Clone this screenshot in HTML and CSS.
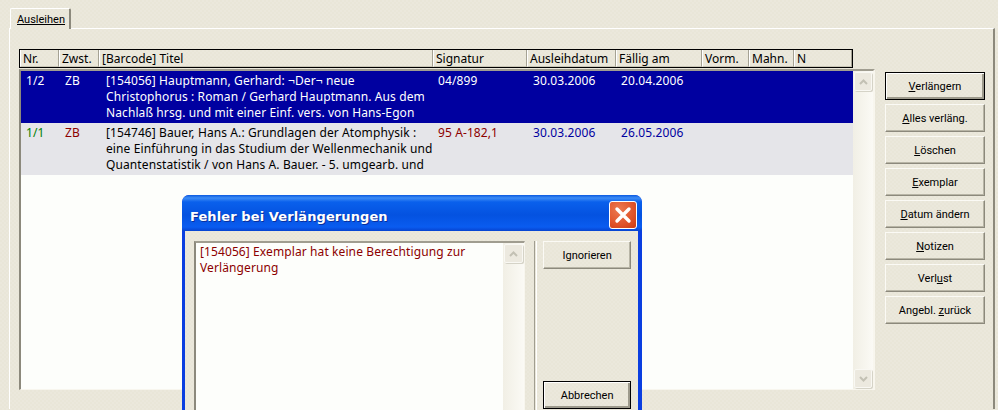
FILE: index.html
```html
<!DOCTYPE html>
<html lang="de">
<head>
<meta charset="utf-8">
<title>Ausleihen</title>
<link rel="stylesheet" href="styles.css">
</head>
<body>
<div class="tabs"><div class="tab"><span class="u">Ausleihen</span></div></div>
<main class="panel">
  <section class="table">
    <div class="thead">
      <div class="th w-nr">Nr.</div>
      <div class="th w-zw">Zwst.</div>
      <div class="th w-ti">[Barcode] Titel</div>
      <div class="th w-si">Signatur</div>
      <div class="th w-au">Ausleihdatum</div>
      <div class="th w-fa">Fällig am</div>
      <div class="th w-vo">Vorm.</div>
      <div class="th w-ma">Mahn.</div>
      <div class="th w-n">N</div>
    </div>
    <div class="list">
      <div class="rows">
        <div class="row selected">
          <div class="td w-nr">1/2</div>
          <div class="td w-zw">ZB</div>
          <div class="td w-ti">[154056] Hauptmann, Gerhard: ¬Der¬ neue<br>Christophorus : Roman / Gerhard Hauptmann. Aus dem<br>Nachlaß hrsg. und mit einer Einf. vers. von Hans-Egon</div>
          <div class="td w-si">04/899</div>
          <div class="td w-au">30.03.2006</div>
          <div class="td w-fa">20.04.2006</div>
        </div>
        <div class="row alt">
          <div class="td w-nr green">1/1</div>
          <div class="td w-zw maroon">ZB</div>
          <div class="td w-ti">[154746] Bauer, Hans A.: Grundlagen der Atomphysik :<br>eine Einführung in das Studium der Wellenmechanik und<br>Quantenstatistik / von Hans A. Bauer. - 5. umgearb. und</div>
          <div class="td w-si maroon">95 A-182,1</div>
          <div class="td w-au navy">30.03.2006</div>
          <div class="td w-fa navy">26.05.2006</div>
        </div>
      </div>
      <div class="scroll">
        <div class="sbtn"><svg viewBox="0 0 9 6" width="9" height="6"><path d="M1 5l3.500-3.500L8 5" class="chev"/></svg></div>
        <div class="sbtn"><svg viewBox="0 0 9 6" width="9" height="6"><path d="M1 1l3.500 3.500L8 1" class="chev"/></svg></div>
      </div>
    </div>
  </section>
  <aside class="actions">
    <button class="btn default"><span class="u">V</span>erlängern</button>
    <button class="btn"><span class="u">A</span>lles verläng.</button>
    <button class="btn"><span class="u">L</span>öschen</button>
    <button class="btn"><span class="u">E</span>xemplar</button>
    <button class="btn"><span class="u">D</span>atum ändern</button>
    <button class="btn"><span class="u">N</span>otizen</button>
    <button class="btn">Verl<span class="u">u</span>st</button>
    <button class="btn">Angebl. <span class="u">z</span>urück</button>
  </aside>
</main>
<div class="dialog">
  <header class="titlebar">
    <h1 class="title">Fehler bei Verlängerungen</h1>
    <div class="close"><svg viewBox="0 0 26 26" width="26" height="26"><path d="M7 7l12 12M19 7L7 19" class="x"/></svg></div>
  </header>
  <div class="client">
    <div class="msgbox">
      <p class="msg">[154056] Exemplar hat keine Berechtigung zur<br>Verlängerung</p>
      <div class="scroll small">
        <div class="sbtn"><svg viewBox="0 0 9 6" width="9" height="6"><path d="M1 5l3.500-3.500L8 5" class="chev"/></svg></div>
      </div>
    </div>
    <div class="sep"></div>
    <div class="dlg-actions">
      <button class="btn">Ignorieren</button>
      <button class="btn default">Abbrechen</button>
    </div>
  </div>
</div>
</body>
</html>
```
FILE: styles.css
```css
* { box-sizing: border-box; }
html, body { margin: 0; height: 410px; overflow: hidden; }
body, .tab, .thead, .btn, .client {
  background: repeating-conic-gradient(#ebe8dc 0 25%, #e9e6d8 0 50%) 0 0 / 4px 4px;
}
body {
  position: relative;
  font: 12px "Noto Sans", sans-serif;
  letter-spacing: .1px;
  color: #000;
  padding: 8px 3px 0 9px;
}
.u { text-decoration: underline; }
.tabs { display: flex; height: 21px; padding-left: 1px; position: relative; z-index: 1; }
.tab {
  width: 61px; height: 21px;
  padding: 3px 0 0 6px;
  border-top: 1px solid #fff;
  border-left: 1px solid #fff;
  border-right: 2px solid #8c897c;
  border-radius: 2px 2px 0 0;
  font: 11px/15px Roboto, sans-serif;
  letter-spacing: 0;
}
.panel {
  display: flex; gap: 10px; align-items: flex-start;
  height: 381px;
  margin-top: -1px;
  padding: 20px 0 0 9px;
  border-top: 1px solid #fff;
  border-left: 1px solid #fff;
  border-right: 2px solid #8c897c;
}
.table { width: 856px; }
.thead {
  display: flex; width: 834px; height: 19px;
  border: 1px solid #000;
  letter-spacing: 0;
}
.th {
  height: 17px; line-height: 17px;
  padding-left: 2px;
  border-left: 1px solid #fff;
  border-right: 1px solid #a5a294;
  border-bottom: 1px solid #c9c6b6;
  white-space: nowrap; overflow: hidden;
}
.w-nr { width: 39px; flex: none; }
.w-zw { width: 40px; flex: none; }
.w-ti { width: 334px; flex: none; }
.w-si { width: 94px; flex: none; }
.w-au { width: 89px; flex: none; }
.w-fa { width: 86px; flex: none; }
.w-vo { width: 47px; flex: none; }
.w-ma { width: 45px; flex: none; }
.w-n { flex: 1; }
.list {
  display: flex; height: 321px; margin-top: 1px;
  background: #fdfefb;
  border-top: 2px solid #a09d90;
  border-left: 2px solid #8c897c;
  border-right: 2px solid #f8f6ee;
  border-bottom: 1px solid #f8f6ee;
}
.rows { width: 832px; flex: none; }
.row { display: flex; height: 52px; line-height: 16px; padding-top: 2px; }
.selected { background: #0000a0; color: #fff; }
.alt { background: #e5e5e9; }
.td { padding-left: 6px; white-space: nowrap; overflow: hidden; }
.row .w-nr { width: 38px; padding-left: 5px; }
.row .w-ti { padding-left: 7px; }
.row .w-si, .row .w-fa { padding-left: 5px; }
.green { color: #008000; }
.maroon { color: #8c0000; }
.navy { color: #0000a0; }
.scroll {
  flex: 1;
  display: flex; flex-direction: column; justify-content: space-between;
  padding: 1px;
  background: linear-gradient(90deg, #f1efe5, #fbfaf5);
}
.sbtn {
  height: 19px; flex: none;
  display: flex; align-items: center; justify-content: center;
  background: #ece9df;
  border: 1px solid #f9f8f3;
  border-radius: 2px;
  box-shadow: 1px 1px 0 #d5d3c7;
}
.chev { fill: none; stroke: #c3c1b4; stroke-width: 2; }
.actions { display: flex; flex-direction: column; gap: 4px; margin-top: 23px; width: 100px; flex: none; }
.btn {
  display: block; width: 100%; height: 28px; padding: 0;
  font: 11px Roboto, sans-serif; color: #000;
  border: 1px solid;
  border-color: #fbfaf5 #8c897c #8c897c #fbfaf5;
  box-shadow: inset -1px -1px 0 #b8b5a6;
}
.btn.default {
  border: 1px solid #000;
  box-shadow: inset 1px 1px 0 #fff, inset -2px -2px 0 #9d9a8c;
}
.dialog {
  position: absolute; left: 182px; top: 195px;
  width: 460px; height: 215px;
  overflow: hidden;
  background: #0a3ee0;
  border-radius: 7px 7px 0 0;
  padding: 0 4px 0 3px;
}
.titlebar {
  display: flex; justify-content: space-between;
  height: 36px; margin: 0 -4px 0 -3px;
  padding: 6px 5px 0 8px;
  border-radius: 7px 7px 0 0;
  background: linear-gradient(180deg, #0a5ae0 0, #3d8cf5 3px, #0a60ec 7px, #0452e0 20px, #0a5cf0 32px, #0643d0 36px);
}
.title {
  margin: 7px 0 0;
  font: bold 13px/17px "DejaVu Sans", sans-serif;
  letter-spacing: .1px;
  color: #fff;
  text-shadow: 1px 1px 0 #0a2f9c;
}
.close {
  width: 28px; height: 28px;
  border: 1px solid #fff; border-radius: 3px;
  background: radial-gradient(circle at 35% 30%, #ec7a52, #e0532a 60%, #c83a12);
}
.close svg { display: block; }
.x { fill: none; stroke: #fff; stroke-width: 3.400; stroke-linecap: round; }
.client {
  display: flex; height: 179px;
  padding: 10px 7px 0 9px;
}
.msgbox {
  display: flex; width: 332px; height: 169px;
  background: #fdfefb;
  border-top: 2px solid #a09d90;
  border-left: 2px solid #8c897c;
  border-right: 1px solid #f8f6ee;
}
.msg { margin: 0; padding: 1px 0 0 4px; width: 307px; flex: none; line-height: 16px; color: #8c0000; white-space: nowrap; }
.scroll.small { flex: 1; }
.sep { width: 3px; height: 169px; margin-left: 9px; border-left: 1px solid #a09d90; border-right: 1px solid #fff; }
.dlg-actions {
  display: flex; flex-direction: column; justify-content: space-between;
  margin-left: 6px; width: 88px; height: 168px;
}
.dlg-actions .btn { height: 28px; }
```
